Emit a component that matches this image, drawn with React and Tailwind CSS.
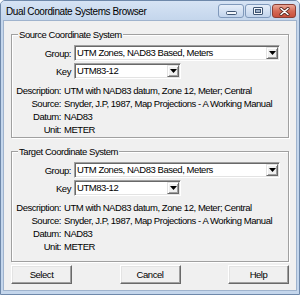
import React from "react";

function Arrow() {
  return (
    <svg width="7" height="4" viewBox="0 0 7 4" className="block">
      <path d="M0 0h7L3.5 4z" fill="#000" />
    </svg>
  );
}

function Combo({ w, text }) {
  return (
    <div
      className={`${w} h-[16px] flex bg-white border border-t-[#a0a0a0] border-l-[#a0a0a0] border-b-white border-r-white shadow-[inset_1px_1px_0_#696969,inset_-1px_-1px_0_#e3e3e3] p-[1px]`}
    >
      <div className="flex-1 pl-[1px] leading-[12px] whitespace-nowrap overflow-hidden">{text}</div>
      <div className="w-[12px] h-[12px] flex items-center justify-center bg-[#f0f0f0] border border-t-[#e3e3e3] border-l-[#e3e3e3] border-b-[#696969] border-r-[#696969] shadow-[inset_1px_1px_0_#fff,inset_-1px_-1px_0_#a0a0a0]">
        <Arrow />
      </div>
    </div>
  );
}

function Info({ label, value }) {
  return (
    <div className="flex leading-[13px] h-[13px] whitespace-nowrap">
      <div className="w-[49px] text-right shrink-0">{label}</div>
      <div className="pl-[3px]">{value}</div>
    </div>
  );
}

function Group({ title, pb }) {
  return (
    <fieldset
      className={`border border-[#a0a0a0] shadow-[1px_1px_0_#fff,inset_1px_1px_0_#fff] px-0 pt-[4px] ${pb}`}
    >
      <legend className="ml-[6px] px-[1px] leading-[13px] bg-[#f0f0f0]">{title}</legend>
      <div className="flex items-center h-[16px]">
        <div className="w-[62px] pr-[3px] text-right leading-[13px]">Group:</div>
        <Combo w="w-[206px]" text="UTM Zones, NAD83 Based, Meters" />
      </div>
      <div className="flex items-center h-[16px] mt-[2px]">
        <div className="w-[62px] pr-[3px] text-right leading-[13px]">Key</div>
        <Combo w="w-[107px]" text="UTM83-12" />
      </div>
      <div className="mt-[5px] flex flex-col">
        <Info label="Description:" value="UTM with NAD83 datum, Zone 12, Meter; Central" />
        <Info label="Source:" value="Snyder, J.P, 1987, Map Projections - A Working Manual" />
        <Info label="Datum:" value="NAD83" />
        <Info label="Unit:" value="METER" />
      </div>
    </fieldset>
  );
}

function Btn({ children }) {
  return (
    <div className="w-[61px] h-[19px] flex items-center justify-center bg-[#f0f0f0] border border-t-white border-l-white border-b-[#696969] border-r-[#696969] shadow-[inset_-1px_-1px_0_#a0a0a0,inset_1px_1px_0_#e3e3e3] leading-[13px]">
      {children}
    </div>
  );
}

function CapButton({ w, kind }) {
  if (kind === "close") {
    return (
      <div className={`${w} h-[14px] rounded-[3px] border border-[#8a3f35] bg-gradient-to-b from-[#e9a797] via-[#d56a56] to-[#c9503c] flex items-center justify-center`}>
        <svg width="11" height="9" viewBox="0 0 11 9">
          <path d="M2 1.5L9 7.5M9 1.5L2 7.5" stroke="#5a2a22" strokeWidth="3.2" strokeLinecap="round" />
          <path d="M2 1.5L9 7.5M9 1.5L2 7.5" stroke="#fff" strokeWidth="1.6" strokeLinecap="round" />
        </svg>
      </div>
    );
  }
  return (
    <div className={`${w} h-[14px] rounded-[3px] border border-[#8099bb] bg-gradient-to-b from-[#e6eef9] to-[#c2d4ec] flex items-center justify-center`}>
      {kind === "min" ? (
        <svg width="11" height="12" viewBox="0 0 11 12">
          <rect x="0.5" y="6.5" width="10" height="3" rx="1" fill="#f4f7fb" stroke="#3f5573" />
        </svg>
      ) : (
        <svg width="10" height="10" viewBox="0 0 10 10">
          <rect x="0.5" y="1.5" width="9" height="7" rx="0.5" fill="#f4f7fb" stroke="#3f5573" />
          <rect x="2.5" y="3.5" width="5" height="3" fill="#9fb1c9" stroke="#3f5573" />
        </svg>
      )}
    </div>
  );
}

export default function App() {
  return (
    <div className="w-[300px] h-[295px] flex flex-col border border-[#6e88aa] rounded-t-[5px] bg-[#c4d6ec] text-black font-['Liberation_Sans',Arial,sans-serif] text-[9.5px] tracking-[-0.45px]">
      <div className="h-[19px] flex items-start pr-[3px] bg-gradient-to-b from-[#d6e3f4] to-[#c4d6ec] rounded-t-[4px]">
        <div className="flex-1 pl-[5px] pt-[4px] text-[10px] tracking-[-0.4px] leading-[13px] whitespace-nowrap">
          Dual Coordinate Systems Browser
        </div>
        <div className="flex gap-[1px] mt-[3px]">
          <CapButton w="w-[26px]" kind="min" />
          <CapButton w="w-[26px]" kind="max" />
          <CapButton w="w-[24px]" kind="close" />
        </div>
      </div>
      <div className="flex-1 mx-[2px] mb-[3px] border border-[#9fb3cd] bg-[#f0f0f0] flex flex-col px-[7px] pt-[7px]">
        <Group title="Source Coordinate System" pb="pb-[1px]" />
        <div className="mt-[7px]">
          <Group title="Target Coordinate System" pb="pb-[8px]" />
        </div>
        <div className="flex justify-between mt-[3px]">
          <Btn>Select</Btn>
          <Btn>Cancel</Btn>
          <Btn>Help</Btn>
        </div>
      </div>
    </div>
  );
}
